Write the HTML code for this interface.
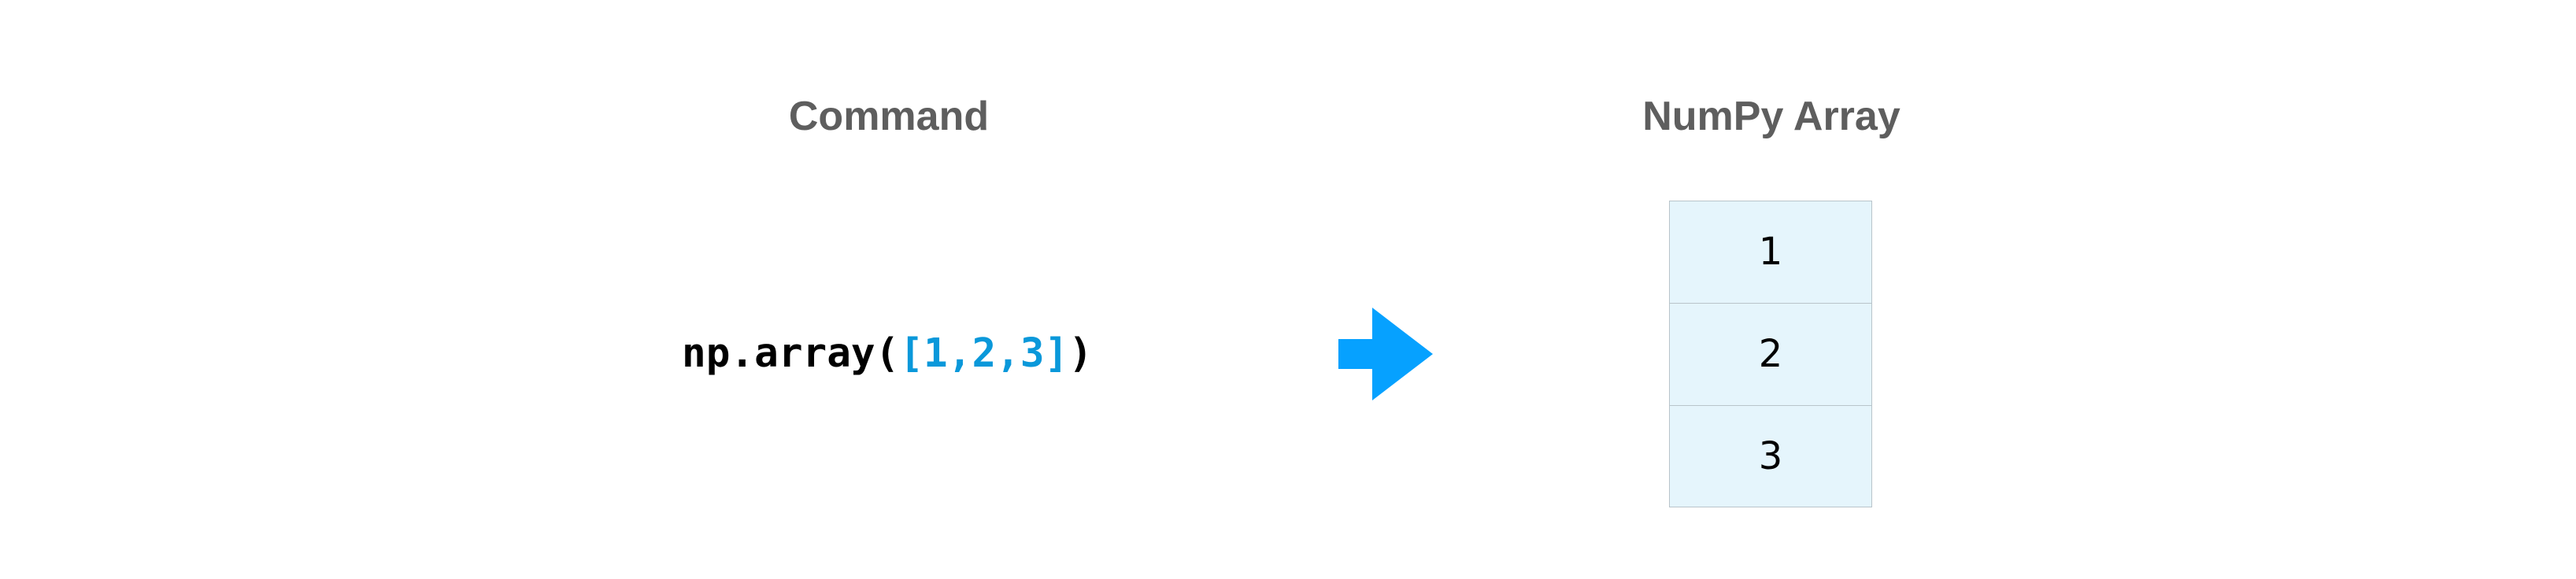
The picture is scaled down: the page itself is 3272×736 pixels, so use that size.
<!DOCTYPE html>
<html><head><style>
html,body{margin:0;padding:0;background:#fff;}
body{width:3272px;height:736px;position:relative;overflow:hidden;}
.h{position:absolute;top:118px;font:bold 52px "Liberation Sans",sans-serif;color:#5e5e5e;width:600px;text-align:center;line-height:60px;}
.code{position:absolute;left:866px;top:418px;font:bold 51px "DejaVu Sans Mono","Liberation Mono",monospace;letter-spacing:0;color:#000;line-height:64px;white-space:pre;}
.b{color:#0a98da;}
.box{position:absolute;left:2120px;top:255px;width:256px;height:388px;border:1px solid #b9c4ca;background:#e5f5fc;}
.cell{height:129px;border-bottom:1px solid #b9c4ca;text-align:center;font:48px "DejaVu Sans","Liberation Sans",sans-serif;line-height:129px;color:#000;}
.cell:last-child{border-bottom:none;}
</style></head><body>
<div class="h" style="left:829px">Command</div>
<div class="h" style="left:1950px">NumPy Array</div>
<div class="code">np.array(<span class="b">[1,2,3]</span>)</div>
<svg style="position:absolute;left:0;top:0" width="3272" height="736"><polygon points="1700,431 1743,431 1743,391 1820,450 1743,509 1743,469 1700,469" fill="#06a1ff"/></svg>
<div class="box"><div class="cell">1</div><div class="cell">2</div><div class="cell">3</div></div>
</body></html>
